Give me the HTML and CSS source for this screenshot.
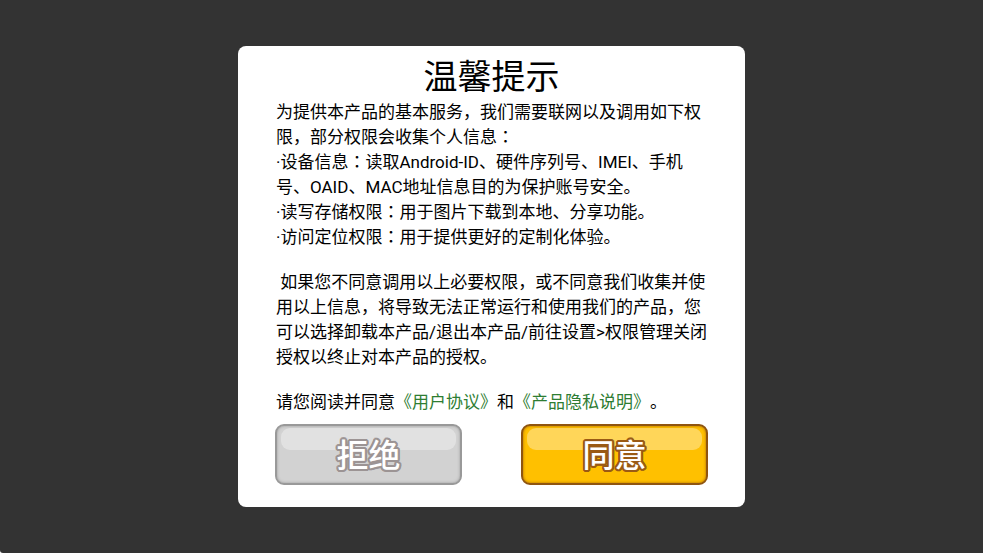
FILE: index.html
```html
<!DOCTYPE html>
<html lang="zh-CN">
<head>
  <meta charset="UTF-8">
  <meta name="viewport" content="width=device-width, initial-scale=1">
  <title>温馨提示</title>
  <link rel="stylesheet" href="styles.css">
</head>
<body>

  <div class="overlay">
    <div class="dialog" role="dialog" aria-labelledby="title">
      <h1 id="title">温馨提示</h1>

      <!-- zh-TW gives the vertically centred colon -->
      <div class="content">
        <p>
          为提供本产品的基本服务，我们需要联网以及调用如下权限，部分权限会收集个人信息<span lang="zh-TW">：</span><br>
          ·设备信息<span lang="zh-TW">：</span>读取Android-ID、硬件序列号、IMEI、手机号、OAID、MAC地址信息目的为保护账号安全。<br>
          ·读写存储权限<span lang="zh-TW">：</span>用于图片下载到本地、分享功能。<br>
          ·访问定位权限<span lang="zh-TW">：</span>用于提供更好的定制化体验。
        </p>
        <p>&nbsp;如果您不同意调用以上必要权限，或不同意我们收集并使用以上信息，将导致无法正常运行和使用我们的产品，您可以选择卸载本产品/退出本产品/前往设置&gt;权限管理关闭授权以终止对本产品的授权。</p>
        <p>请您阅读并同意<a href="#">《用户协议》</a>和<a href="#">《产品隐私说明》</a>。</p>
      </div>

      <div class="actions">
        <button type="button" class="btn btn-refuse">拒绝</button>
        <button type="button" class="btn btn-agree">同意</button>
      </div>
    </div>
  </div>

</body>
</html>
```

FILE: styles.css
```css
html { background: #fff; }
body {
  margin: 0;
  font-family: Roboto, "Noto Sans CJK SC", sans-serif;
  color: #000;
}

.overlay {
  display: flex;
  align-items: center;
  justify-content: center;
  min-height: 100vh;
  background: #333;
  border-bottom-left-radius: 3px;
}

.dialog {
  box-sizing: border-box;
  width: 507px;
  max-width: 100%;
  padding: 8px 37px 22px;
  background: #fff;
  border-radius: 8px;
}

h1 {
  margin: 0;
  font-size: 34px;
  font-weight: 400;
  line-height: 46px;
  text-align: center;
}

.content {
  padding-left: 1px;
  font-size: 17px;
  line-height: 25px;
  text-spacing-trim: space-all;
}
.content p { margin: 0 0 20px; }
.content p:last-child { margin-bottom: 9px; }
.content a {
  color: #2e7d32;
  text-decoration: none;
}

.actions {
  display: flex;
  justify-content: space-between;
}

.btn {
  position: relative;
  isolation: isolate;
  width: 187px;
  height: 61px;
  padding: 0 0 2px;
  border: 2px solid;
  border-radius: 9px;
  color: #fff;
  font-family: "Noto Sans CJK SC", sans-serif;
  font-size: 32px;
  font-weight: 500;
  line-height: 55px;
  text-shadow:
    2px 0 var(--edge), -2px 0 var(--edge),
    0 2px var(--edge), 0 -2px var(--edge),
    2px 1px var(--edge), -2px 1px var(--edge),
    2px -1px var(--edge), -2px -1px var(--edge),
    1px 2px var(--edge), -1px 2px var(--edge),
    1px -2px var(--edge), -1px -2px var(--edge);
  cursor: pointer;
}
/* glossy strip along the top */
.btn::before {
  content: "";
  position: absolute;
  z-index: -1;
  top: 2px;
  left: 4px;
  right: 4px;
  height: 22px;
  border-radius: 9px;
  background: rgba(255, 255, 255, 0.35);
}

.btn-refuse {
  --edge: #9c9494;
  border-color: #999;
  background: #d2d2d2;
  box-shadow: inset 0 0 3px #999;
}
.btn-agree {
  --edge: #9a5a14;
  border-color: #8f5510;
  background: #ffc000;
  box-shadow: inset 0 0 3px #a86400;
}
```
